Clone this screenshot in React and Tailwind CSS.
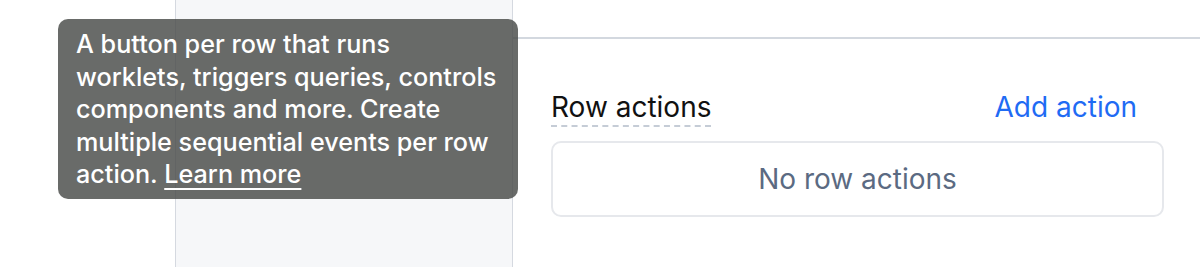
import React from "react";

export default function App() {
  return (
    <div className="relative w-[1200px] h-[267px] bg-white overflow-hidden" style={{ fontFamily: "Inter, 'Noto Sans', sans-serif" }}>
      <div className="flex h-full">
        <div className="w-[176px] shrink-0 border-r border-[#d5d9e0]" />
        <div className="w-[337px] shrink-0 bg-[#f6f7f9] border-r border-[#d5d9e0]" />
        <div className="flex-1 flex flex-col">
          <div className="h-[39px] border-b-2 border-[#d3d8df]" />
          <div className="pl-[38px] pr-[36px] pt-[52px]">
            <div className="flex items-start justify-between">
              <span className="text-[28px] leading-[32px] text-[#111] border-b-2 border-dashed border-[#c5ccd6] pb-[2px]">Row actions</span>
              <span className="text-[28px] leading-[32px] text-[#1f6bf4] pr-[27px]">Add action</span>
            </div>
            <div className="mt-[14px] h-[76px] border-2 border-[#e6e8ec] rounded-[10px] flex items-center justify-center text-[28px] text-[#5b6a82]">
              No row actions
            </div>
          </div>
        </div>
      </div>
      <div className="absolute left-[58px] top-[19px] w-[460px] h-[180px] rounded-[10px] bg-[rgba(72,74,72,0.82)] pl-[18px] pt-[9px] text-white text-[25.2px] leading-[32.5px] font-medium whitespace-nowrap">
        A button per row that runs<br />
        worklets, triggers queries, controls<br />
        components and more. Create<br />
        multiple sequential events per row<br />
        action.{" "}
        <span className="underline underline-offset-[5px] decoration-[2px]">Learn more</span>
      </div>
    </div>
  );
}
